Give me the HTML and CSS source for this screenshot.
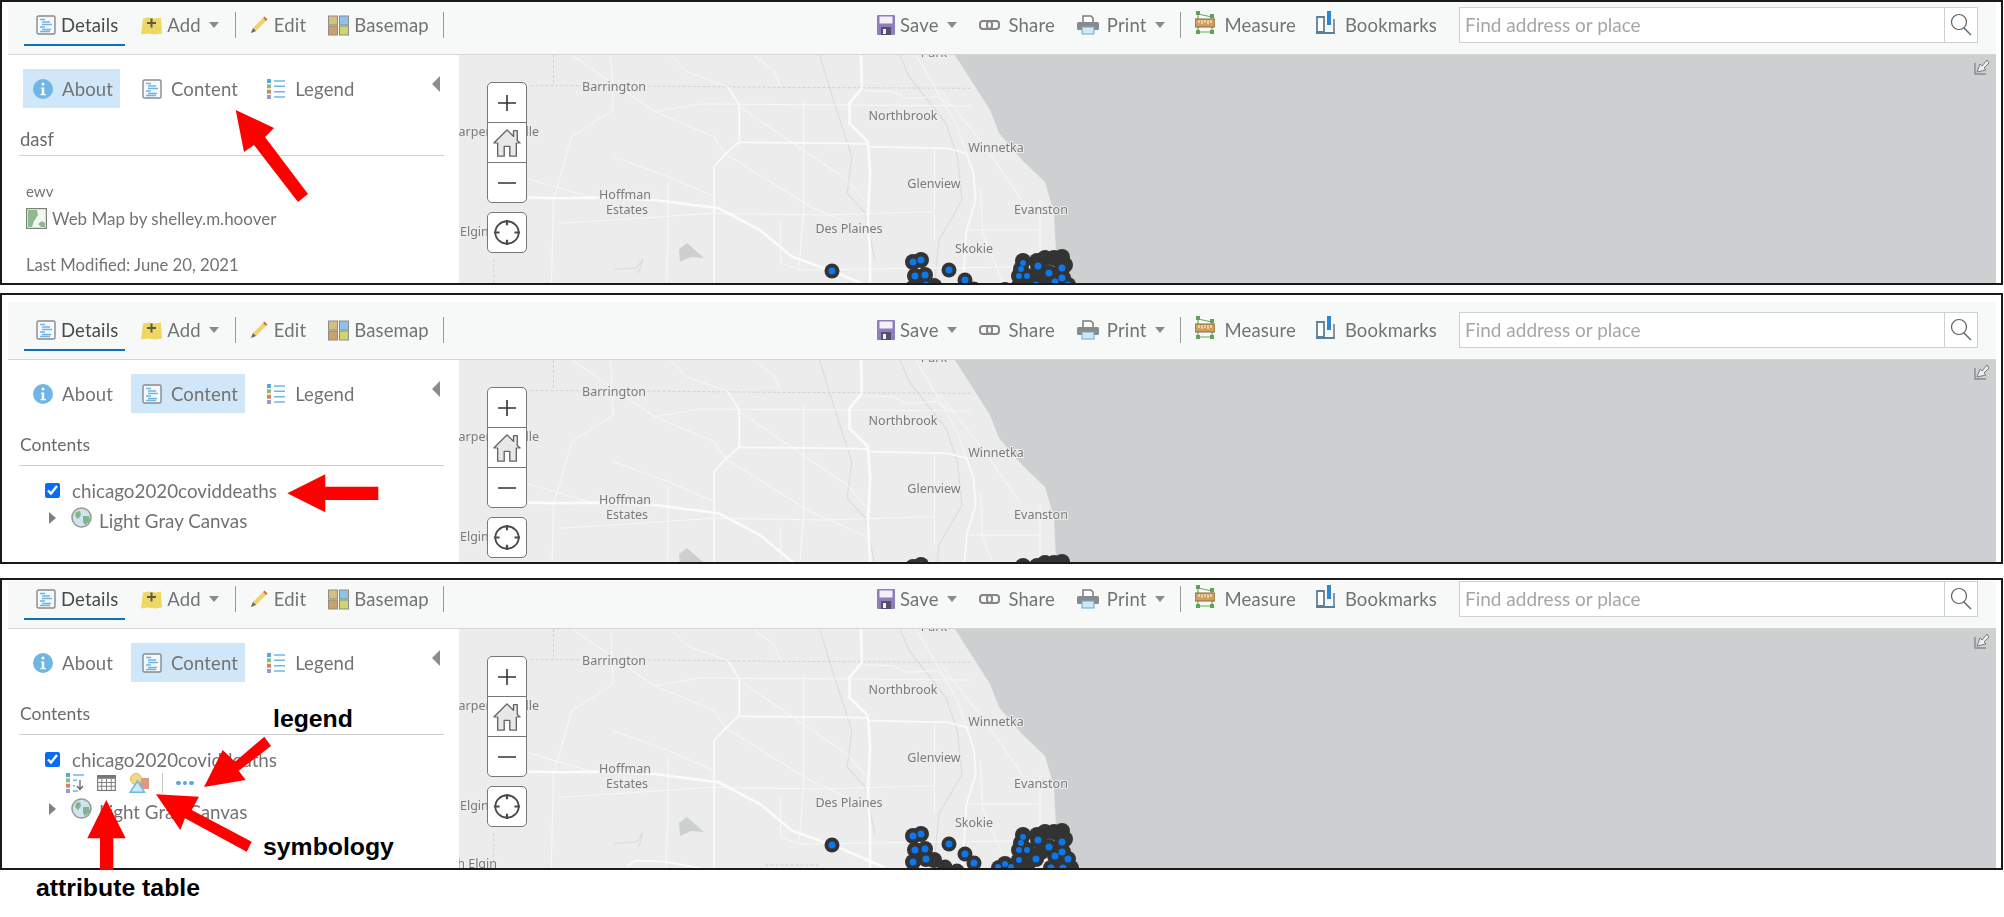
FILE: index.html
```html
<!DOCTYPE html>
<html lang="en">
<head>
<meta charset="utf-8">
<title>Map Viewer steps</title>
<link rel="stylesheet" href="styles.css">
</head>
<body>
<svg class="defs" xmlns="http://www.w3.org/2000/svg">
  <symbol id="i-doc" viewBox="0 0 20 20">
    <rect x="1" y="1" width="18" height="18" rx="1.5" fill="#f5f9fc" stroke="#8a8a8a" stroke-width="1.4"/>
    <path d="M4 4.5h5M6 7h8M6 9.5h10M4 12h5M6 14.5h9M4 16.5h10" stroke="#6fb4e2" stroke-width="1.3" fill="none"/>
  </symbol>
  <symbol id="i-add" viewBox="0 0 21 20">
    <path d="M2 3l6-1 6 1 6-1 1 16-7 1-7-1-7 1z" fill="#efd764"/>
    <path d="M10.500 3v9M6 7.500h9" stroke="#5a5a4a" stroke-width="2" fill="none"/>
  </symbol>
  <symbol id="i-edit" viewBox="0 0 20 20">
    <path d="M2 18l2-5L14 3l3 3L7 16z" fill="#efd26a"/>
    <path d="M14 3l1.500-1.500 3 3L17 6z" fill="#c9704a"/>
    <path d="M2 18l2-5 3 3z" fill="#6b6b60"/>
  </symbol>
  <symbol id="i-basemap" viewBox="0 0 21 20">
    <rect x=".5" y=".5" width="9" height="9" fill="#d3c07c" stroke="#8c8c8c"/>
    <rect x="11.500" y=".5" width="9" height="9" fill="#8fc3e6" stroke="#8c8c8c"/>
    <rect x=".5" y="10.500" width="9" height="9" fill="#cf9f68" stroke="#8c8c8c"/>
    <rect x="11.500" y="10.500" width="9" height="9" fill="#cfd56c" stroke="#8c8c8c"/>
  </symbol>
  <symbol id="i-save" viewBox="0 0 18 20">
    <rect width="18" height="20" rx="1" fill="#8f7dbd"/>
    <rect x="2.500" y="1.500" width="13" height="7" fill="#f3f1f8"/>
    <rect x="4" y="12" width="10" height="8" fill="#55506a"/>
    <rect x="6" y="14" width="3" height="5" fill="#f3f1f8"/>
  </symbol>
  <symbol id="i-share" viewBox="0 0 21 12">
    <rect x="1" y="2" width="12" height="8" rx="3" fill="none" stroke="#858585" stroke-width="2"/>
    <rect x="8" y="2" width="12" height="8" rx="3" fill="none" stroke="#858585" stroke-width="2"/>
  </symbol>
  <symbol id="i-print" viewBox="0 0 22 20">
    <path d="M6 8V1h8l2 2v5z" fill="#fff" stroke="#7b7b7b" stroke-width="1.500"/>
    <rect y="7" width="22" height="8" rx="1.500" fill="#8a8a8a"/>
    <rect x="5" y="12" width="12" height="7" fill="#cfe6f6" stroke="#6fa7cf"/>
  </symbol>
  <symbol id="i-measure" viewBox="0 0 20 24">
    <path d="M3 3l14 3M3 3v18M17 6v15M3 21h14" stroke="#6aa85f" stroke-width="1.200" fill="none"/>
    <rect x="0" y="8" width="20" height="8" fill="#cf9f5c" stroke="#8b6a3c"/>
    <path d="M4 9v3M7 9v4M10 9v3M13 9v4M16 9v3" stroke="#fff" fill="none"/>
    <rect x="1" y="0" width="4" height="4" fill="#5fa357"/><rect x="15" y="3" width="4" height="4" fill="#5fa357"/>
    <rect x="1" y="19" width="4" height="4" fill="#5fa357"/><rect x="15" y="19" width="4" height="4" fill="#5fa357"/>
  </symbol>
  <symbol id="i-bookmarks" viewBox="0 0 21 24">
    <path d="M2 21V6h7v15z" fill="#fff" stroke="#5c7f9c" stroke-width="1.800"/>
    <path d="M1 22h19" stroke="#5c7f9c" stroke-width="2" fill="none"/>
    <path d="M19 8v13" stroke="#7a8a96" stroke-width="1.800" fill="none"/>
    <rect x="12" y="0" width="4" height="14" fill="#2f86d0"/>
  </symbol>
  <symbol id="i-search" viewBox="0 0 22 24">
    <circle cx="9" cy="9" r="7.500" fill="none" stroke="#5e5e5e" stroke-width="1.200"/>
    <path d="M14 15l7 7" stroke="#4f6f88" stroke-width="1.500" fill="none"/>
  </symbol>
  <symbol id="i-info" viewBox="0 0 20 20">
    <circle cx="10" cy="10" r="10" fill="#6fb6e4"/>
    <circle cx="10" cy="5" r="1.500" fill="#fff"/>
    <path d="M8 8.500h3.200V15H13v1.300H7.500V15h1.300V9.800H8z" fill="#fff"/>
  </symbol>
  <symbol id="i-legend" viewBox="0 0 18 20">
    <rect width="4" height="4" fill="#58a8df"/><rect y="5.300" width="4" height="4" fill="#8cbb78"/>
    <rect y="10.700" width="4" height="4" fill="#d9825e"/><rect y="16" width="4" height="4" fill="#a394cc"/>
    <path d="M7 2h11M7 7.300h11M7 12.700h11M7 18h11" stroke="#6fb6e4" stroke-width="1.400" fill="none"/>
  </symbol>
  <symbol id="i-webmap" viewBox="0 0 21 21">
    <rect x=".6" y=".6" width="19.800" height="19.800" fill="#f4f7f2" stroke="#7f7f7f" stroke-width="1.200"/>
    <path d="M2 2h9l1 5-4 6-2 6H2zM15 19l-3-3 4-3 3 2v4z" fill="#8dbb8e"/>
  </symbol>
  <symbol id="i-globe" viewBox="0 0 21 21">
    <circle cx="10.500" cy="10.500" r="9.500" fill="#cfe4ee" stroke="#9a9a9a" stroke-width="1.600"/>
    <path d="M5 5l4-1 1 4-3 4-3-3zM12 9l6 0 1 5-5 4-2-3z" fill="#7fb58d"/>
  </symbol>
  <symbol id="i-legend-down" viewBox="0 0 18 20">
    <rect width="4" height="4" fill="#58a8df"/><rect y="5.300" width="4" height="4" fill="#8cbb78"/>
    <rect y="10.700" width="4" height="4" fill="#d9825e"/><rect y="16" width="4" height="4" fill="#a394cc"/>
    <path d="M7 2h11M7 7.300h4M7 12.700h2M7 18h5" stroke="#6fb6e4" stroke-width="1.400" fill="none"/>
    <path d="M14 7v9M11 13l3 3.500 3-3.500" stroke="#666" stroke-width="1.300" fill="none"/>
  </symbol>
  <symbol id="i-table" viewBox="0 0 20 17">
    <rect x=".6" y=".6" width="18.800" height="15.800" fill="#fff" stroke="#777" stroke-width="1.200"/>
    <rect x=".6" y=".6" width="18.800" height="3.400" fill="#777"/>
    <path d="M5 4v12M10 4v12M15 4v12M1 8h18M1 12h18" stroke="#777" fill="none"/>
  </symbol>
  <symbol id="i-symbology" viewBox="0 0 20 20">
    <rect x="9" y="5" width="11" height="11" fill="#dc9a80"/>
    <circle cx="7" cy="6" r="5.500" fill="#f1d98a" stroke="#d8b85c"/>
    <path d="M1 19.300L8.500 8l7 11.300z" fill="#cfe8f8" stroke="#6fb6e4" stroke-width="1.500"/>
  </symbol>
  <symbol id="i-home" viewBox="0 0 30 34" preserveAspectRatio="none">
    <path d="M1 17L15 1l7 8V2h4v12l3 3h-4v16h-7V21h-6v12H5V17z" fill="#e8e8e8" stroke="#666" stroke-width="1.500" stroke-linejoin="round"/>
  </symbol>
  <symbol id="i-locate" viewBox="0 0 30 30" preserveAspectRatio="none">
    <circle cx="15" cy="15" r="12.500" fill="none" stroke="#4a4a4a" stroke-width="2"/>
    <path d="M15 1v6M15 23v6M1 15h6M23 15h6" stroke="#4a4a4a" stroke-width="2.400" fill="none"/>
  </symbol>
  <symbol id="i-full" viewBox="0 0 16 17">
    <path d="M1 5v11h11" fill="none" stroke="#8a8a8a" stroke-width="1.400"/>
    <path d="M3 14l3-8 2 2 5-6 2 3-5 5 2 2z" fill="#ededed" stroke="#7a7a7a"/>
  </symbol>
  <symbol id="map-base" viewBox="0 0 1538 245" overflow="visible">
    <polygon class="water" points="494,-2 531,56 540,79 563,106 586,128 595,159 597,199 613,229 622,250 1545,250 1545,-2"/>
    <polygon class="water" points="220,195 228,189 245,204 232,203 221,208"/>
    <g transform="matrix(.459 0 0 .3333 21 -54)">
      <polyline class="creek" points="740,165 770,300 810,470 800,580 840,640 860,780"/>
      <polyline class="creek" points="915,165 935,230 1015,370 1040,470 1050,600 1000,720 990,860"/>
      <polyline class="creek" points="293,808 342,803 355,776 345,820"/>
      <polyline class="dash" points="110,257 220,257"/>
      <polyline class="dash" points="365,258 640,262 1070,265"/>
      <polyline class="dash" points="160,165 160,257"/>
      <polyline class="dash" points="30,778 30,878"/>
      <polyline class="dash" points="622,873 738,873"/>
      <polyline class="r1" points="200,165 380,335 510,410 535,462"/>
      <polyline class="r1" points="415,165 450,215 540,260"/>
      <polyline class="r1" points="595,165 640,210 655,260"/>
      <polyline class="r1" points="200,410 290,330 285,165"/>
      <polyline class="r1" points="200,410 160,600 155,900"/>
      <polyline class="r1" points="105,537 250,595"/>
      <polyline class="r1" points="565,320 800,540 850,620"/>
      <polyline class="r1" points="535,462 720,620 850,700"/>
      <polyline class="r1" points="705,300 705,640 695,800"/>
      <polyline class="r1" points="410,545 410,700 405,900"/>
      <polyline class="r1" points="290,470 410,530 510,590"/>
      <polyline class="r1" points="170,670 510,640 750,645 990,635"/>
      <polyline class="r1" points="655,665 655,790 700,810 1220,800"/>
      <polyline class="r1" points="990,445 990,720"/>
      <polyline class="r1" points="1220,600 1220,830"/>
      <polyline class="r1" points="1090,560 1095,700 1140,850"/>
      <polyline class="r1" points="1060,690 1220,690"/>
      <polyline class="r1" points="380,335 480,312 805,315 1070,318"/>
      <polyline class="r1" points="835,272 900,275 930,295 995,290 1030,320"/>
      <polyline class="r1" points="950,165 990,260 1040,380 1060,460"/>
      <polyline class="r1" points="1000,265 1100,440 1180,600"/>
      <polyline class="r2" points="320,878 338,860 400,863 507,888"/>
      <polyline class="r2" points="845,440 1020,445 1060,460 1075,520 1080,600 1060,690 1050,880"/>
      <polyline class="r2" points="565,427 800,430 845,432"/>
      <polyline class="r2" points="540,260 565,315 565,425 535,462 510,500 510,600 510,900"/>
      <polyline class="r3" points="830,165 832,265 805,310 805,370 845,425 850,520 845,650 850,760 850,900"/>
      <polyline class="r3" points="105,593 175,595 250,593 380,600 520,625 610,690 680,770 780,820 880,880"/>
    </g>
  </symbol>
  <symbol id="map-dots" viewBox="0 0 1538 245" overflow="visible">
    <g class="dot-back">
      <circle cx="373" cy="217" r="7.500"/>
      <circle cx="454" cy="208" r="8"/><circle cx="462" cy="206" r="8"/><circle cx="456" cy="222" r="8"/><circle cx="466" cy="221" r="8"/>
      <circle cx="454" cy="234" r="8"/><circle cx="467" cy="231" r="8"/><circle cx="475" cy="232" r="8"/>
      <circle cx="490" cy="216" r="7.500"/><circle cx="506" cy="226" r="7.500"/><circle cx="515" cy="235" r="7.500"/>
      <circle cx="486" cy="239" r="7.500"/><circle cx="498" cy="243" r="7.500"/>
      <circle cx="540" cy="240" r="8"/><circle cx="546" cy="236" r="8"/><circle cx="552" cy="240" r="8"/>
      <circle cx="564" cy="207" r="8"/><circle cx="562" cy="215" r="8"/><circle cx="560" cy="222" r="8"/><circle cx="568" cy="222" r="8"/><circle cx="560" cy="232" r="8"/>
      <circle cx="577" cy="231" r="8"/><circle cx="568" cy="238" r="8"/>
      <circle cx="578" cy="207" r="8"/><circle cx="586" cy="204" r="8"/><circle cx="595" cy="204" r="8"/><circle cx="603" cy="203" r="8"/><circle cx="606" cy="211" r="8"/>
      <circle cx="579" cy="212" r="8"/><circle cx="590" cy="219" r="8"/><circle cx="603" cy="214" r="8"/><circle cx="604" cy="224" r="8"/><circle cx="596" cy="228" r="8"/>
      <circle cx="609" cy="231" r="8"/><circle cx="592" cy="240" r="8"/><circle cx="604" cy="240" r="8"/><circle cx="582" cy="224" r="8"/><circle cx="612" cy="240" r="8"/>
    </g>
    <g class="dot-core">
      <circle cx="373" cy="217" r="3.500"/><circle cx="454" cy="208" r="3.500"/><circle cx="462" cy="206" r="3.500"/><circle cx="456" cy="222" r="3.500"/><circle cx="466" cy="221" r="3.500"/>
      <circle cx="454" cy="234" r="3.500"/><circle cx="467" cy="231" r="3.500"/><circle cx="490" cy="216" r="3.500"/><circle cx="506" cy="226" r="3.500"/><circle cx="515" cy="235" r="3.500"/>
      <circle cx="546" cy="236" r="3"/><circle cx="539" cy="239" r="3"/><circle cx="552" cy="239" r="3"/>
      <circle cx="564" cy="209" r="3"/><circle cx="562" cy="215" r="3"/><circle cx="560" cy="222" r="3"/><circle cx="568" cy="222" r="3"/><circle cx="560" cy="232" r="3"/><circle cx="577" cy="231" r="3.500"/>
      <circle cx="579" cy="212" r="3.500"/><circle cx="590" cy="219" r="3.500"/><circle cx="603" cy="214" r="3.500"/><circle cx="603" cy="224" r="3.500"/><circle cx="596" cy="228" r="3.500"/>
      <circle cx="609" cy="231" r="3.500"/><circle cx="592" cy="240" r="3.500"/><circle cx="604" cy="240" r="3.500"/>
    </g>
  </symbol>
</svg>

<section class="panel panel-one">
  <header class="toolbar">
    <div class="tool-group">
      <a class="tool tool-active"><svg class="ic ic-20"><use href="#i-doc"/></svg>Details</a>
      <a class="tool tool-add"><svg class="ic ic-21"><use href="#i-add"/></svg>Add<i class="caret"></i></a>
      <i class="sep"></i>
      <a class="tool"><svg class="ic ic-20"><use href="#i-edit"/></svg>Edit</a>
      <a class="tool tool-base"><svg class="ic ic-21"><use href="#i-basemap"/></svg>Basemap</a>
      <i class="sep sep-end"></i>
    </div>
    <div class="tool-group">
      <a class="tool"><svg class="ic ic-save"><use href="#i-save"/></svg>Save<i class="caret"></i></a>
      <a class="tool tool-share"><svg class="ic ic-share"><use href="#i-share"/></svg>Share</a>
      <a class="tool tool-print"><svg class="ic ic-print"><use href="#i-print"/></svg>Print<i class="caret"></i></a>
      <i class="sep sep-right"></i>
      <a class="tool tool-measure"><svg class="ic ic-measure"><use href="#i-measure"/></svg>Measure</a>
      <a class="tool tool-book"><svg class="ic ic-book"><use href="#i-bookmarks"/></svg>Bookmarks</a>
      <div class="search"><span class="search-text">Find address or place</span><span class="search-btn"><svg class="ic ic-search"><use href="#i-search"/></svg></span></div>
    </div>
  </header>
  <div class="workspace">
    <aside class="sidebar">
      <nav class="tabs">
        <a class="tab tab-about tab-on"><svg class="ic ic-20"><use href="#i-info"/></svg>About</a>
        <a class="tab tab-content"><svg class="ic ic-20"><use href="#i-doc"/></svg>Content</a>
        <a class="tab tab-legend"><svg class="ic ic-legend"><use href="#i-legend"/></svg>Legend</a>
        <i class="collapse"></i>
      </nav>
      <h2 class="pane-title pane-title-about">dasf</h2>
      <p class="about-desc">ewv</p>
      <p class="about-by"><svg class="ic ic-21"><use href="#i-webmap"/></svg>Web Map by shelley.m.hoover</p>
      <p class="about-date">Last Modified: June 20, 2021</p>
    </aside>
    <main class="map">
      <svg class="map-art">
        <use href="#map-base" width="1538" height="245"/>
        <use href="#map-dots" width="1538" height="245"/>
        <text class="lbl" x="475" y="3" text-anchor="middle">Park</text>
        <text class="lbl" x="155" y="37" text-anchor="middle">Barrington</text>
        <text class="lbl" x="444" y="66" text-anchor="middle">Northbrook</text>
        <text class="lbl" x="537" y="98" text-anchor="middle">Winnetka</text>
        <text class="lbl" x="475" y="134" text-anchor="middle">Glenview</text>
        <text class="lbl" x="166" y="145" text-anchor="middle">Hoffman</text>
        <text class="lbl" x="168" y="160" text-anchor="middle">Estates</text>
        <text class="lbl" x="582" y="160" text-anchor="middle">Evanston</text>
        <text class="lbl" x="390" y="179" text-anchor="middle">Des Plaines</text>
        <text class="lbl" x="515" y="199" text-anchor="middle">Skokie</text>
        <text class="lbl" x="80" y="82" text-anchor="end">Carpentersville</text>
        <text class="lbl" x="1" y="182">Elgin</text>
      </svg>
      <div class="controls">
        <div class="zoombox">
          <span class="zb"><svg class="ic ic-pm" viewBox="0 0 20 20" preserveAspectRatio="none"><path class="pm" d="M10 1v18M1 10h18"/></svg></span>
          <span class="zb"><svg class="ic ic-home"><use href="#i-home"/></svg></span>
          <span class="zb"><svg class="ic ic-pm" viewBox="0 0 20 20" preserveAspectRatio="none"><path class="pm" d="M1 10h18"/></svg></span>
        </div>
        <span class="locate"><svg class="ic ic-locate"><use href="#i-locate"/></svg></span>
      </div>
      <svg class="ic ic-full"><use href="#i-full"/></svg>
    </main>
  </div>
</section>

<section class="panel panel-two">
  <header class="toolbar">
    <div class="tool-group">
      <a class="tool tool-active"><svg class="ic ic-20"><use href="#i-doc"/></svg>Details</a>
      <a class="tool tool-add"><svg class="ic ic-21"><use href="#i-add"/></svg>Add<i class="caret"></i></a>
      <i class="sep"></i>
      <a class="tool"><svg class="ic ic-20"><use href="#i-edit"/></svg>Edit</a>
      <a class="tool tool-base"><svg class="ic ic-21"><use href="#i-basemap"/></svg>Basemap</a>
      <i class="sep sep-end"></i>
    </div>
    <div class="tool-group">
      <a class="tool"><svg class="ic ic-save"><use href="#i-save"/></svg>Save<i class="caret"></i></a>
      <a class="tool tool-share"><svg class="ic ic-share"><use href="#i-share"/></svg>Share</a>
      <a class="tool tool-print"><svg class="ic ic-print"><use href="#i-print"/></svg>Print<i class="caret"></i></a>
      <i class="sep sep-right"></i>
      <a class="tool tool-measure"><svg class="ic ic-measure"><use href="#i-measure"/></svg>Measure</a>
      <a class="tool tool-book"><svg class="ic ic-book"><use href="#i-bookmarks"/></svg>Bookmarks</a>
      <div class="search"><span class="search-text">Find address or place</span><span class="search-btn"><svg class="ic ic-search"><use href="#i-search"/></svg></span></div>
    </div>
  </header>
  <div class="workspace">
    <aside class="sidebar">
      <nav class="tabs">
        <a class="tab tab-about"><svg class="ic ic-20"><use href="#i-info"/></svg>About</a>
        <a class="tab tab-content tab-on"><svg class="ic ic-20"><use href="#i-doc"/></svg>Content</a>
        <a class="tab tab-legend"><svg class="ic ic-legend"><use href="#i-legend"/></svg>Legend</a>
        <i class="collapse"></i>
      </nav>
      <h2 class="pane-title">Contents</h2>
      <div class="layers">
        <label class="layer"><input class="layer-check" type="checkbox" checked>chicago2020coviddeaths</label>
        <div class="layer layer-base"><i class="expand"></i><svg class="ic ic-globe"><use href="#i-globe"/></svg>Light Gray Canvas</div>
      </div>
    </aside>
    <main class="map">
      <svg class="map-art">
        <use href="#map-base" width="1538" height="245"/>
        <use href="#map-dots" width="1538" height="245"/>
        <text class="lbl" x="475" y="3" text-anchor="middle">Park</text>
        <text class="lbl" x="155" y="37" text-anchor="middle">Barrington</text>
        <text class="lbl" x="444" y="66" text-anchor="middle">Northbrook</text>
        <text class="lbl" x="537" y="98" text-anchor="middle">Winnetka</text>
        <text class="lbl" x="475" y="134" text-anchor="middle">Glenview</text>
        <text class="lbl" x="166" y="145" text-anchor="middle">Hoffman</text>
        <text class="lbl" x="168" y="160" text-anchor="middle">Estates</text>
        <text class="lbl" x="582" y="160" text-anchor="middle">Evanston</text>
        <text class="lbl" x="80" y="82" text-anchor="end">Carpentersville</text>
        <text class="lbl" x="1" y="182">Elgin</text>
      </svg>
      <div class="controls">
        <div class="zoombox">
          <span class="zb"><svg class="ic ic-pm" viewBox="0 0 20 20" preserveAspectRatio="none"><path class="pm" d="M10 1v18M1 10h18"/></svg></span>
          <span class="zb"><svg class="ic ic-home"><use href="#i-home"/></svg></span>
          <span class="zb"><svg class="ic ic-pm" viewBox="0 0 20 20" preserveAspectRatio="none"><path class="pm" d="M1 10h18"/></svg></span>
        </div>
        <span class="locate"><svg class="ic ic-locate"><use href="#i-locate"/></svg></span>
      </div>
      <svg class="ic ic-full"><use href="#i-full"/></svg>
    </main>
  </div>
</section>

<section class="panel panel-three">
  <header class="toolbar">
    <div class="tool-group">
      <a class="tool tool-active"><svg class="ic ic-20"><use href="#i-doc"/></svg>Details</a>
      <a class="tool tool-add"><svg class="ic ic-21"><use href="#i-add"/></svg>Add<i class="caret"></i></a>
      <i class="sep"></i>
      <a class="tool"><svg class="ic ic-20"><use href="#i-edit"/></svg>Edit</a>
      <a class="tool tool-base"><svg class="ic ic-21"><use href="#i-basemap"/></svg>Basemap</a>
      <i class="sep sep-end"></i>
    </div>
    <div class="tool-group">
      <a class="tool"><svg class="ic ic-save"><use href="#i-save"/></svg>Save<i class="caret"></i></a>
      <a class="tool tool-share"><svg class="ic ic-share"><use href="#i-share"/></svg>Share</a>
      <a class="tool tool-print"><svg class="ic ic-print"><use href="#i-print"/></svg>Print<i class="caret"></i></a>
      <i class="sep sep-right"></i>
      <a class="tool tool-measure"><svg class="ic ic-measure"><use href="#i-measure"/></svg>Measure</a>
      <a class="tool tool-book"><svg class="ic ic-book"><use href="#i-bookmarks"/></svg>Bookmarks</a>
      <div class="search"><span class="search-text">Find address or place</span><span class="search-btn"><svg class="ic ic-search"><use href="#i-search"/></svg></span></div>
    </div>
  </header>
  <div class="workspace">
    <aside class="sidebar">
      <nav class="tabs">
        <a class="tab tab-about"><svg class="ic ic-20"><use href="#i-info"/></svg>About</a>
        <a class="tab tab-content tab-on"><svg class="ic ic-20"><use href="#i-doc"/></svg>Content</a>
        <a class="tab tab-legend"><svg class="ic ic-legend"><use href="#i-legend"/></svg>Legend</a>
        <i class="collapse"></i>
      </nav>
      <h2 class="pane-title">Contents</h2>
      <div class="layers">
        <label class="layer"><input class="layer-check" type="checkbox" checked>chicago2020coviddeaths</label>
        <div class="layer-tools">
          <svg class="ic ic-legend"><use href="#i-legend-down"/></svg>
          <svg class="ic ic-table"><use href="#i-table"/></svg>
          <svg class="ic ic-20"><use href="#i-symbology"/></svg>
          <i class="tools-sep"></i>
          <span class="more"><i></i><i></i><i></i></span>
        </div>
        <div class="layer layer-base"><i class="expand"></i><svg class="ic ic-globe"><use href="#i-globe"/></svg>Light Gray Canvas</div>
      </div>
    </aside>
    <main class="map">
      <svg class="map-art">
        <use href="#map-base" width="1538" height="245"/>
        <use href="#map-dots" width="1538" height="245"/>
        <text class="lbl" x="475" y="3" text-anchor="middle">Park</text>
        <text class="lbl" x="155" y="37" text-anchor="middle">Barrington</text>
        <text class="lbl" x="444" y="66" text-anchor="middle">Northbrook</text>
        <text class="lbl" x="537" y="98" text-anchor="middle">Winnetka</text>
        <text class="lbl" x="475" y="134" text-anchor="middle">Glenview</text>
        <text class="lbl" x="166" y="145" text-anchor="middle">Hoffman</text>
        <text class="lbl" x="168" y="160" text-anchor="middle">Estates</text>
        <text class="lbl" x="582" y="160" text-anchor="middle">Evanston</text>
        <text class="lbl" x="390" y="179" text-anchor="middle">Des Plaines</text>
        <text class="lbl" x="515" y="199" text-anchor="middle">Skokie</text>
        <text class="lbl" x="80" y="82" text-anchor="end">Carpentersville</text>
        <text class="lbl" x="1" y="182">Elgin</text>
        <text class="lbl" x="38" y="240" text-anchor="end">South Elgin</text>
      </svg>
      <div class="controls">
        <div class="zoombox">
          <span class="zb"><svg class="ic ic-pm" viewBox="0 0 20 20" preserveAspectRatio="none"><path class="pm" d="M10 1v18M1 10h18"/></svg></span>
          <span class="zb"><svg class="ic ic-home"><use href="#i-home"/></svg></span>
          <span class="zb"><svg class="ic ic-pm" viewBox="0 0 20 20" preserveAspectRatio="none"><path class="pm" d="M1 10h18"/></svg></span>
        </div>
        <span class="locate"><svg class="ic ic-locate"><use href="#i-locate"/></svg></span>
      </div>
      <svg class="ic ic-full"><use href="#i-full"/></svg>
    </main>
  </div>
</section>

<svg class="annotations" xmlns="http://www.w3.org/2000/svg">
  <polygon class="arrow" points="235.700,110 274,128 265,137 308,194 298,202 254,145 244,152"/>
  <polygon class="arrow" points="287.300,493.300 325.300,474.300 325.300,486.700 378.300,486.700 378.300,500 325.300,500 325.300,512.300"/>
  <polygon class="arrow" points="204,787 222.700,750 235,761.700 264.300,736.700 271,746 238.700,770.700 245.700,780"/>
  <polygon class="arrow" points="156,794.300 199,796.700 191.700,810 251.700,841.700 246.700,851.700 185,818.300 180.300,830"/>
  <polygon class="arrow" points="106.300,800 125.700,838.300 113.300,838.300 113.300,870 100,870 100,838.300 87.300,838.300"/>
  <text class="note" x="273" y="727">legend</text>
  <text class="note" x="263" y="855">symbology</text>
  <text class="note" x="36" y="896">attribute table</text>
</svg>
</body>
</html>
```

FILE: styles.css
```css
* { box-sizing: border-box; }
html, body { margin: 0; padding: 0; background: #fff; }
body { position: relative; width: 2004px; height: 917px; overflow: hidden; font-family: Lato, "Liberation Sans", sans-serif; }
.defs { display: none; }
a { color: inherit; text-decoration: none; }
p, h2 { margin: 0; font-weight: 400; }

.panel { display: flex; flex-direction: column; width: 2003px; border: 2px solid #1a1a1a; padding: 0 5px 0 6px; overflow: hidden; background: #fff; filter: blur(.35px); }
.panel-one { height: 285px; }
.panel-two { height: 271px; margin-top: 8px; padding-top: 7px; }
.panel-three { height: 292px; margin-top: 14px; padding-top: 1px; }

.toolbar { flex: none; display: flex; justify-content: space-between; align-items: flex-end; overflow: hidden; background: #f7f9f9; padding-right: 18px; position: relative; z-index: 1; box-shadow: 0 1px 0 #d4d6d6; font-size: 18.500px; letter-spacing: .15px; color: #737373; }
.panel-one .toolbar { height: 52px; }
.panel-two .toolbar { height: 57px; }
.panel-three .toolbar { height: 47px; }

.tool-group { display: flex; align-items: center; height: 58px; flex: none; }
.tool { display: flex; align-items: center; gap: 5px; height: 32px; margin-left: 16px; white-space: nowrap; }
.tool-active { height: 42px; margin-left: 16px; padding: 2px 7px 0 12px; border-bottom: 2px solid #0f6fb8; color: #4a4a4a; }
.tool-add { margin-left: 16px; }
.tool-share { margin-left: 22px; }
.tool-print { margin-left: 22px; }
.tool-measure { margin-left: 14px; gap: 10px; }
.tool-book { margin-left: 19px; gap: 9px; }
.tool-base { margin-left: 22px; }
.ic { display: block; flex: none; }
.ic-20 { width: 20px; height: 20px; }
.ic-21 { width: 21px; height: 21px; }
.ic-save { width: 18px; height: 20px; }
.ic-share { width: 21px; height: 12px; margin-right: 4px; }
.ic-print { width: 22px; height: 20px; margin-right: 3px; }
.ic-measure { width: 20px; height: 24px; margin-top: -4px; }
.ic-book { width: 21px; height: 24px; margin-top: -4px; }
.ic-legend { width: 18px; height: 20px; }
.ic-table { width: 19px; height: 16px; }
.ic-globe { width: 21px; height: 21px; margin: 0 7px 5px 15px; }
.ic-search { width: 22px; height: 24px; }
.caret { width: 0; height: 0; margin-left: 3px; border-left: 5.500px solid transparent; border-right: 5.500px solid transparent; border-top: 6px solid #8a8a8a; }
.sep { width: 1px; height: 26px; background: #9a9a9a; margin-left: 16px; margin-right: -3px; flex: none; }
.sep-end { margin-left: 14px; margin-right: 0; }
.sep-right { margin-left: 15px; margin-right: 0; }

.search { display: flex; width: 519px; height: 36px; margin-left: 22px; background: #fff; border: 1px solid #ccd0d0; }
.search-text { flex: 1; padding-left: 5px; line-height: 34px; font-size: 19px; letter-spacing: 0; color: #a6a6a6; }
.search-btn { display: flex; align-items: center; justify-content: center; width: 33px; border-left: 1px solid #ccd0d0; }

.workspace { flex: 1; min-height: 0; display: flex; }
.sidebar { flex: none; width: 451px; background: #fff; color: #737373; }
.tabs { display: flex; padding: 15px 19px 0 15px; font-size: 18.500px; letter-spacing: .15px; }
.tab { display: flex; align-items: center; gap: 9px; height: 39px; padding: 0 7px 0 11px; margin-right: 11px; }
.tab-about { padding-left: 10px; }
.tab-legend { gap: 10px; }
.tab-on { background: #cfe7f8; }
.collapse { margin: 7px 0 0 auto; width: 0; height: 0; border-top: 8px solid transparent; border-bottom: 8px solid transparent; border-right: 8px solid #8c8c8c; }

.pane-title { margin: 21px 15px 0 11px; padding: 0 0 9px 1px; font-size: 17.500px; line-height: 22px; border-bottom: 1.500px solid #cfcfcf; color: #6a6a6a; }
.pane-title-about { margin-top: 20px; padding-bottom: 5px; font-size: 18.500px; }
.about-desc { margin: 26px 0 0 18px; font-size: 15px; line-height: 18px; }
.about-by { display: flex; align-items: center; gap: 5px; height: 22px; margin: 7px 0 0 18px; font-size: 17px; }
.about-date { margin: 27px 0 0 18px; font-size: 16.700px; line-height: 18px; }

.layers { margin: 12px 0 0 37px; font-size: 18.800px; color: #737373; }
.layer { display: flex; align-items: center; height: 24px; white-space: nowrap; }
.layer-check { width: 15px; height: 15px; margin: 0 12px 0 0; accent-color: #0a6cf5; }
.layer-base { margin-top: 6px; }
.expand { margin-left: 4px; width: 0; height: 0; margin-bottom: 5px; border-top: 6.500px solid transparent; border-bottom: 6.500px solid transparent; border-left: 7px solid #808080; }
.layer-tools { display: flex; align-items: center; gap: 13px; height: 24px; margin: 0 0 -2px 21px; }
.tools-sep { width: 1px; height: 20px; background: #c8c8c8; margin-left: 0; }
.more { display: flex; gap: 2px; }
.more i { width: 4.500px; height: 4.500px; border-radius: 50%; background: #58a8df; }

.map { position: relative; flex: 1; min-width: 0; background: #ececec; overflow: hidden; }
.map-art { display: block; width: 100%; height: 100%; }
.water { fill: #cdd0d1; }
.creek { fill: none; stroke: #dcdcdc; stroke-width: 1.200; vector-effect: non-scaling-stroke; }
.dash { fill: none; stroke: #d2d2d2; stroke-width: 1; stroke-dasharray: 3 2; vector-effect: non-scaling-stroke; }
.r1 { fill: none; stroke: #f8f8f8; stroke-width: 1; vector-effect: non-scaling-stroke; }
.r2 { fill: none; stroke: #fafafa; stroke-width: 1.800; vector-effect: non-scaling-stroke; }
.r3 { fill: none; stroke: #fbfbfb; stroke-width: 2.600; vector-effect: non-scaling-stroke; }
.dot-back { fill: #333; }
.dot-core { fill: #0a78f0; }
.lbl { font-family: "Noto Sans", sans-serif; font-size: 12.500px; fill: #7a7a7a; stroke: #eee; stroke-width: 2px; paint-order: stroke; }

.controls { position: absolute; left: 28px; top: 28px; display: flex; flex-direction: column; gap: 9px; }
.zoombox { display: flex; flex-direction: column; width: 40px; background: #fff; border: 1px solid #777; border-radius: 5px; overflow: hidden; }
.zb { display: flex; align-items: center; justify-content: center; height: 39px; }
.zb + .zb { border-top: 1px solid #777; height: 40px; }
.locate { display: flex; align-items: center; justify-content: center; width: 40px; height: 41px; background: #fff; border: 1px solid #777; border-radius: 5px; }
.ic-pm { width: 20px; height: 18px; }
.pm { fill: none; stroke: #333; stroke-width: 1.600; }
.ic-home { width: 28px; height: 28px; }
.ic-locate { width: 28px; height: 27px; }
.ic-full { position: absolute; right: 6px; top: 4px; width: 16px; height: 17px; }

.annotations { position: absolute; left: 0; top: 0; width: 2004px; height: 917px; pointer-events: none; }
.arrow { fill: #fe0000; }
.note { font-family: "Liberation Sans", Arial, sans-serif; font-weight: 700; font-size: 24.800px; fill: #000; }
```
